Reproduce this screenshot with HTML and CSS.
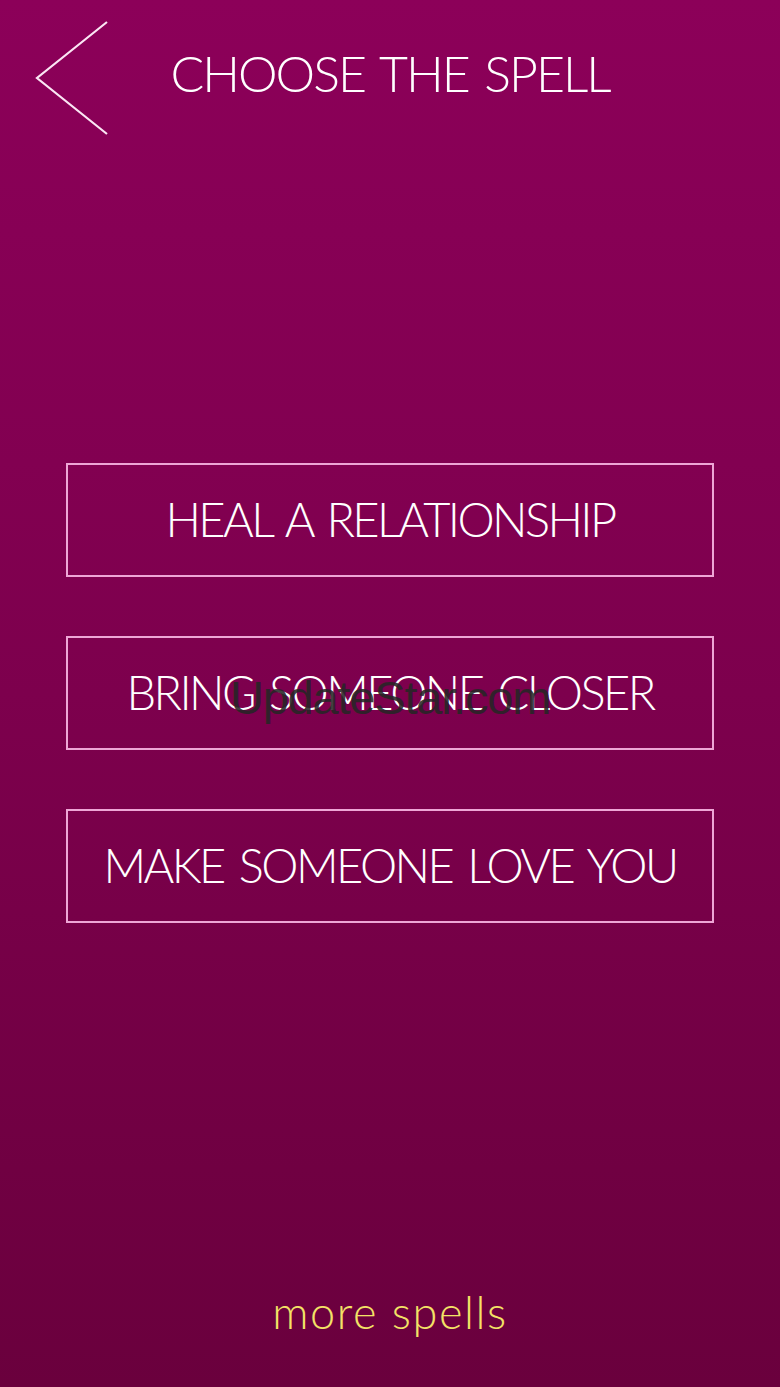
FILE: index.html
```html
<!DOCTYPE html>
<html>
<head>
<meta charset="utf-8">
<link rel="stylesheet" href="styles.css">
</head>
<body>
<div class="screen">
  <header class="header">
    <svg class="back" width="74" height="114" viewBox="0 0 74 114">
      <polyline points="72,1 2,57 72,113" fill="none" stroke="#fbe6f4" stroke-width="2.2" stroke-linejoin="miter"/>
    </svg>
    <h1 class="title">CHOOSE THE SPELL</h1>
    <div></div>
  </header>
  <main class="list">
    <div class="spell">HEAL A RELATIONSHIP</div>
    <div class="spell">BRING SOMEONE CLOSER<span class="watermark">UpdateStar.com</span></div>
    <div class="spell">MAKE SOMEONE LOVE YOU</div>
  </main>
  <footer class="footer">
    <div class="more">more spells</div>
  </footer>
</div>
</body>
</html>
```
FILE: styles.css
```css
html, body {
  margin: 0;
  padding: 0;
}
body {
  width: 780px;
  height: 1387px;
  overflow: hidden;
  font-family: "Lato", "Open Sans", sans-serif;
}
.screen {
  height: 1387px;
  display: flex;
  flex-direction: column;
  background: linear-gradient(to bottom, #8c0059 0%, #7d004d 50%, #6a003d 100%);
  color: #fff;
}
.header {
  display: grid;
  grid-template-columns: 1fr auto 1fr;
  align-items: center;
  height: 156px;
  box-sizing: border-box;
}
.back {
  display: block;
  margin-left: 35px;
}
.title {
  margin: 0;
  margin-top: -10px;
  font-weight: 300;
  font-size: 50px;
  letter-spacing: -2px;
  word-spacing: 4px;
  color: #fff;
  white-space: nowrap;
}
.list {
  margin: 307px 66px 0 66px;
  display: flex;
  flex-direction: column;
  gap: 59px;
}
.spell {
  position: relative;
  height: 114px;
  box-sizing: border-box;
  border: 2px solid #eea6d6;
  display: flex;
  align-items: center;
  justify-content: center;
  font-weight: 300;
  font-size: 47px;
  letter-spacing: -2.6px;
  word-spacing: 5px;
  white-space: nowrap;
  color: #fff;
  padding-bottom: 2px;
}
.watermark {
  position: absolute;
  left: 0;
  right: 0;
  top: 32px;
  text-align: center;
  font-family: "Liberation Sans", sans-serif;
  font-size: 47px;
  color: rgba(38, 38, 38, 0.9);
  letter-spacing: -1.2px;
  word-spacing: 0;
}
.footer {
  flex: 1;
  display: flex;
  flex-direction: column;
  justify-content: flex-end;
  align-items: center;
  padding-bottom: 48px;
}
.more {
  font-weight: 300;
  font-size: 45px;
  color: #f3e266;
  letter-spacing: 1.6px;
}
```
